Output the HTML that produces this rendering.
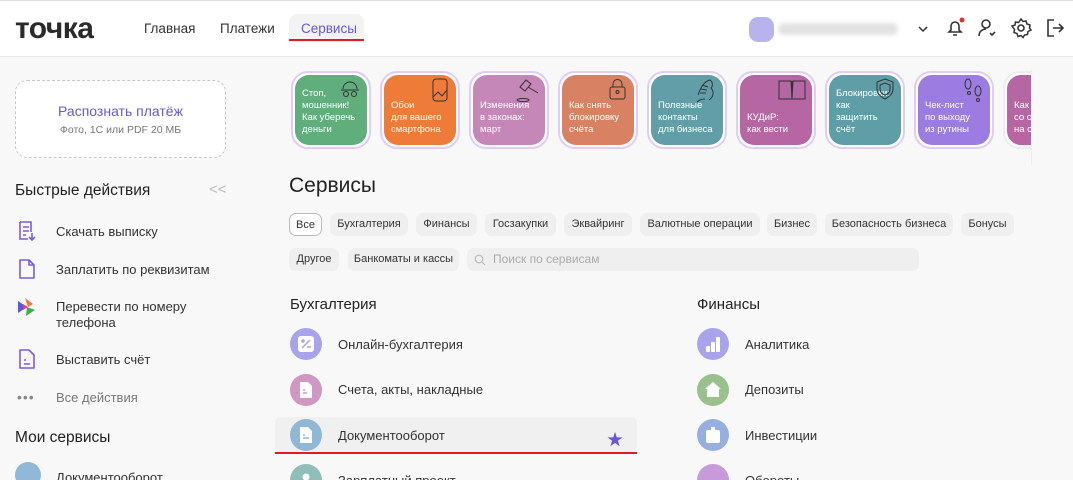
<!DOCTYPE html>
<html><head><meta charset="utf-8"><style>
*{box-sizing:border-box;margin:0;padding:0}
html,body{width:1073px;height:480px;overflow:hidden}
body{background:#f8f8f8;font-family:"Liberation Sans","Noto Sans CJK SC",sans-serif;color:#222;position:relative}
.hdr{position:absolute;left:0;top:0;width:1073px;height:57px;background:#fff;border-bottom:1px solid #e8e8e8;border-top:1px solid #ddd}
.abs{position:absolute}
.logo{left:15px;top:11px;font-size:30px;font-weight:bold;letter-spacing:-0.5px;color:#2a2a2a}
.nav{top:20px;font-size:13.5px;color:#333}
.tile{position:absolute;top:71px;width:80px;height:78px;border-radius:17px;border:2px solid #e0ccf5;padding:2px;background:#fff}
.tile>div{width:100%;height:100%;border-radius:14px;color:#fff;font-size:9.5px;line-height:12px;padding:0 7px;display:flex;flex-direction:column;justify-content:flex-end;padding-bottom:9px;position:relative}
.tile svg{position:absolute;right:5px;top:2px}
.chip{position:absolute;height:23px;border-radius:7px;background:#efefef;font-size:11px;color:#333;line-height:23px;text-align:center}
.ic{position:absolute;width:32px;height:32px;border-radius:50%}
.ic svg{position:absolute;left:8px;top:8px}
.it{position:absolute;font-size:13px;color:#333}
.qa{position:absolute;left:56px;font-size:13px;color:#333}
</style></head><body>
<div class="hdr">
<div class="abs logo">точка</div>
<div class="abs nav" style="left:144px">Главная</div>
<div class="abs nav" style="left:220px">Платежи</div>
<div class="abs" style="left:289px;top:13px;width:75px;height:28px;background:#f3f3f3;border-radius:8px 8px 0 0"></div>
<div class="abs nav" style="left:301px;color:#6a55d6">Сервисы</div>
<div class="abs" style="left:289px;top:38px;width:75px;height:2px;background:#e01c1c"></div>
<div class="abs" style="left:749px;top:16px;width:25px;height:25px;border-radius:9px;background:#b8b3ec"></div>
<div class="abs" style="left:778px;top:22px;width:120px;height:12px;border-radius:6px;background:#e2e2e2;filter:blur(2px)"></div>
<svg class="abs" style="left:916px;top:22px" width="14" height="12" viewBox="0 0 14 12"><path d="M3 4l4 4 4-4" fill="none" stroke="#333" stroke-width="1.5"/></svg>
<svg class="abs" style="left:944px;top:16px" width="22" height="22" viewBox="0 0 22 22"><path d="M5 15h12l-2-2V9a4 4 0 0 0-8 0v4z M9 18h4" fill="none" stroke="#333" stroke-width="1.6"/><circle cx="18" cy="3" r="2.5" fill="#e0302f"/></svg>
<svg class="abs" style="left:976px;top:16px" width="22" height="22" viewBox="0 0 22 22"><circle cx="10" cy="7" r="4" fill="none" stroke="#333" stroke-width="1.6"/><path d="M3 19c0-5 4-7 7-7 M14 16l2 2 3-3" fill="none" stroke="#333" stroke-width="1.6"/></svg>
<svg class="abs" style="left:1010px;top:16px" width="22" height="22" viewBox="0 0 22 22"><circle cx="11" cy="11" r="3" fill="none" stroke="#333" stroke-width="1.6"/><path d="M11 2l2 2.5 3-.5 1 3 3 1-.5 3L21 13l-3 1.5-.5 3-3 .5-1.5 2.5-2-2-3 1-1-3-3-1 .5-3L2 9l3-1 .5-3 3 .5z" fill="none" stroke="#333" stroke-width="1.5"/></svg>
<svg class="abs" style="left:1044px;top:16px" width="22" height="22" viewBox="0 0 22 22"><path d="M10 3H4v16h6 M9 11h10 M15 7l4 4-4 4" fill="none" stroke="#333" stroke-width="1.6"/></svg>
</div>

<div class="abs" style="left:15px;top:80px;width:211px;height:78px;border:1.5px dashed #c8c8c8;border-radius:12px;background:#fff"></div>
<div class="abs" style="left:15px;top:103px;width:211px;text-align:center;font-size:14px;color:#6a55d6">Распознать платёж</div>
<div class="abs" style="left:15px;top:124px;width:211px;text-align:center;font-size:10.5px;color:#777">Фото, 1С или PDF 20 МБ</div>

<div class="abs" style="left:15px;top:182px;font-size:15.5px;color:#222">Быстрые действия</div>
<div class="abs" style="left:209px;top:181px;font-size:15px;color:#bbb">&lt;&lt;</div>
<svg class="abs" style="left:16px;top:220px" width="22" height="22" viewBox="0 0 22 22"><path d="M4 2h11v10 M4 2v17h8 M7 7h6 M7 11h6 M7 15h3 M16 13v7 M13 17l3 3 3-3" fill="none" stroke="#7a5ae0" stroke-width="1.6"/></svg>
<div class="qa" style="top:224px">Скачать выписку</div>
<svg class="abs" style="left:16px;top:258px" width="22" height="22" viewBox="0 0 22 22"><path d="M4 2h9l5 5v13H4z M13 2v5h5" fill="none" stroke="#7a5ae0" stroke-width="1.6" stroke-linejoin="round"/></svg>
<div class="qa" style="top:262px">Заплатить по реквизитам</div>
<svg class="abs" style="left:17px;top:297px" width="20" height="20" viewBox="0 0 20 20"><path d="M1 4l9 6-9 6z" fill="#5b57d8"/><path d="M8 1l8 6-5 3z" fill="#f07a30"/><path d="M10 10l8 3-9 6z" fill="#3bb04a"/><path d="M6 7l5 3-5 3z" fill="#e03c8a"/></svg>
<div class="qa" style="top:299px;line-height:16px">Перевести по номеру<br>телефона</div>
<svg class="abs" style="left:16px;top:348px" width="22" height="22" viewBox="0 0 22 22"><path d="M4 2h9l5 5v13H4z M8 12h2 M8 16h6" fill="none" stroke="#7a5ae0" stroke-width="1.6" stroke-linejoin="round"/></svg>
<div class="qa" style="top:352px">Выставить счёт</div>
<div class="abs" style="left:17px;top:389px;font-size:14px;color:#888;letter-spacing:1px">•••</div>
<div class="qa" style="top:390px;color:#777">Все действия</div>
<div class="abs" style="left:15px;top:429px;font-size:15.5px">Мои сервисы</div>
<div class="ic" style="left:15px;top:462px;width:26px;height:26px;background:#90b8d8"></div>
<div class="qa" style="top:470px">Документооборот</div>

<div class="tile" style="left:291px"><div style="background:#5fae7b"><svg width="24" height="24" viewBox="0 0 24 24"><path d="M5 12a7 7 0 0 1 14 0 M3 13h18" fill="none" stroke="#333" stroke-width="1"/><circle cx="8" cy="17" r="2.5" fill="none" stroke="#333"/><circle cx="16" cy="17" r="2.5" fill="none" stroke="#333"/></svg>Стоп,<br>мошенник!<br>Как уберечь<br>деньги</div></div>
<div class="tile" style="left:380px"><div style="background:#ee7b38"><svg width="24" height="26" viewBox="0 0 24 26"><rect x="6" y="2" width="14" height="22" rx="3" fill="none" stroke="#333"/><path d="M6 20l5-5 4 4 5-6" fill="none" stroke="#333"/></svg>Обои<br>для вашего<br>смартфона</div></div>
<div class="tile" style="left:469px"><div style="background:#c587b8"><svg width="26" height="26" viewBox="0 0 26 26"><path d="M6 10l6-7 5 4-6 7z M14 10l10 6" fill="none" stroke="#333"/><ellipse cx="9" cy="23" rx="6" ry="1.5" fill="none" stroke="#333"/></svg>Изменения<br>в законах:<br>март</div></div>
<div class="tile" style="left:558px"><div style="background:#d88263"><svg width="24" height="24" viewBox="0 0 24 24"><rect x="5" y="10" width="15" height="12" rx="2" fill="none" stroke="#333"/><path d="M8 10V7a4.5 4.5 0 0 1 9 0v3" fill="none" stroke="#333"/><circle cx="12.5" cy="15" r="1.5" fill="none" stroke="#333"/></svg>Как снять<br>блокировку<br>счёта</div></div>
<div class="tile" style="left:647px"><div style="background:#629ea8"><svg width="26" height="26" viewBox="0 0 26 26"><path d="M6 18c2-6 6-14 12-15 3 2 3 6 1 8 3 3 3 9-2 12 M10 8l6 2 M9 12l6 1 M8 16l6 0 M5 25c3-3 6-3 8-3" fill="none" stroke="#333"/></svg>Полезные<br>контакты<br>для бизнеса</div></div>
<div class="tile" style="left:736px"><div style="background:#b666a3"><svg width="30" height="24" viewBox="0 0 30 24"><path d="M2 4h12l1 18H2z M15 22l1-18h12v18z M15 4v18" fill="none" stroke="#333"/></svg>КУДиР:<br>как вести</div></div>
<div class="tile" style="left:825px"><div style="background:#5f9ea7"><svg width="22" height="24" viewBox="0 0 22 24"><path d="M11 2l8 3v7c0 5-4 8-8 10-4-2-8-5-8-10V5z M11 6l5 2v4c0 3-2 5-5 6-3-1-5-3-5-6V8z" fill="none" stroke="#333"/></svg>Блокировки:<br>как<br>защитить<br>счёт</div></div>
<div class="tile" style="left:914px"><div style="background:#9c7ce0"><svg width="24" height="26" viewBox="0 0 24 26"><ellipse cx="7" cy="7" rx="3" ry="5" fill="none" stroke="#333"/><ellipse cx="17" cy="14" rx="3" ry="5" fill="none" stroke="#333"/><circle cx="8" cy="16" r="1.5" fill="none" stroke="#333"/><circle cx="17" cy="23" r="1.5" fill="none" stroke="#333"/></svg>Чек-лист<br>по выходу<br>из рутины</div></div>
<div style="position:absolute;left:1003px;top:71px;width:28px;height:78px;overflow:hidden"><div class="tile" style="left:0;top:0;border-color:#eee"><div style="background:#b666a3">Как<br>со с<br>на с</div></div></div>
<div class="abs" style="left:1031px;top:70px;width:1px;height:95px;background:#ececec"></div>

<div class="abs" style="left:289px;top:174px;font-size:21px;color:#222">Сервисы</div>
<div class="chip" style="left:289px;top:213px;width:33px;background:#fff;border:1.5px solid #bbb">Все</div>
<div class="chip" style="left:330px;top:213px;width:78px">Бухгалтерия</div>
<div class="chip" style="left:416px;top:213px;width:61px">Финансы</div>
<div class="chip" style="left:485px;top:213px;width:71px">Госзакупки</div>
<div class="chip" style="left:564px;top:213px;width:68px">Эквайринг</div>
<div class="chip" style="left:640px;top:213px;width:120px">Валютные операции</div>
<div class="chip" style="left:767px;top:213px;width:50px">Бизнес</div>
<div class="chip" style="left:825px;top:213px;width:128px">Безопасность бизнеса</div>
<div class="chip" style="left:961px;top:213px;width:53px">Бонусы</div>
<div class="chip" style="left:289px;top:248px;width:50px">Другое</div>
<div class="chip" style="left:348px;top:248px;width:111px">Банкоматы и кассы</div>
<div class="chip" style="left:467px;top:248px;width:452px;text-align:left;padding-left:26px;color:#aaa;font-size:12px">Поиск по сервисам</div>
<svg class="abs" style="left:474px;top:254px" width="12" height="12" viewBox="0 0 12 12"><circle cx="5" cy="5" r="3.8" fill="none" stroke="#bbb" stroke-width="1.2"/><path d="M8 8l3 3" stroke="#bbb" stroke-width="1.2"/></svg>

<div class="abs" style="left:290px;top:296px;font-size:15px">Бухгалтерия</div>
<div class="abs" style="left:697px;top:296px;font-size:15px">Финансы</div>
<div class="abs" style="left:275px;top:417px;width:362px;height:36px;background:#f0f0f0;border-radius:6px"></div>
<div class="abs" style="left:275px;top:452px;width:362px;height:2px;background:#e01c1c"></div>
<div class="abs" style="left:607px;top:426px;color:#6a55d6;font-size:16px">★</div>

<div class="ic" style="left:290px;top:328px;background:#a9a3ec"><svg width="16" height="16" viewBox="0 0 16 16"><rect x="0" y="0" width="16" height="16" rx="3" fill="#fff"/><path d="M3 5h4 M5 3v4 M9 11h4 M12 4l-8 8" stroke="#a9a3ec" stroke-width="1.5"/></svg></div><div class="it" style="left:338px;top:337px">Онлайн-бухгалтерия</div>
<div class="ic" style="left:290px;top:374px;background:#cf97c2"><svg width="16" height="16" viewBox="0 0 16 16"><path d="M2 0h8l4 4v12H2z" fill="#fff"/><path d="M5 8h2 M5 11h4" stroke="#cf97c2" stroke-width="1.4"/></svg></div><div class="it" style="left:338px;top:382px">Счета, акты, накладные</div>
<div class="ic" style="left:290px;top:419px;background:#90b8d4"><svg width="16" height="16" viewBox="0 0 16 16"><path d="M2 0h8l4 4v12H2z" fill="#fff"/><path d="M5 8h2 M5 11h6" stroke="#90b8d4" stroke-width="1.4"/></svg></div><div class="it" style="left:338px;top:428px">Документооборот</div>
<div class="ic" style="left:290px;top:464px;background:#8fbfb8"><svg width="16" height="16" viewBox="0 0 16 16"><circle cx="8" cy="5" r="3.5" fill="#fff"/></svg></div><div class="it" style="left:338px;top:473px">Зарплатный проект</div>
<div class="ic" style="left:697px;top:328px;background:#a9a3ec"><svg width="16" height="16" viewBox="0 0 16 16"><rect x="1" y="10" width="4" height="6" rx="1" fill="#fff"/><rect x="6" y="6" width="4" height="10" rx="1" fill="#fff"/><rect x="11" y="1" width="4" height="15" rx="1" fill="#fff"/></svg></div><div class="it" style="left:745px;top:337px">Аналитика</div>
<div class="ic" style="left:697px;top:374px;background:#9ac08e"><svg width="16" height="16" viewBox="0 0 16 16"><path d="M8 0l8 7h-2v8H2V7H0z" fill="#fff"/></svg></div><div class="it" style="left:745px;top:382px">Депозиты</div>
<div class="ic" style="left:697px;top:419px;background:#96aee0"><svg width="16" height="16" viewBox="0 0 16 16"><rect x="1" y="3" width="14" height="13" rx="2" fill="#fff"/><path d="M6 0h4v3H6z" fill="#fff"/></svg></div><div class="it" style="left:745px;top:428px">Инвестиции</div>
<div class="ic" style="left:697px;top:464px;background:#c79ada"></div><div class="it" style="left:745px;top:473px">Обороты</div>
</body></html>
